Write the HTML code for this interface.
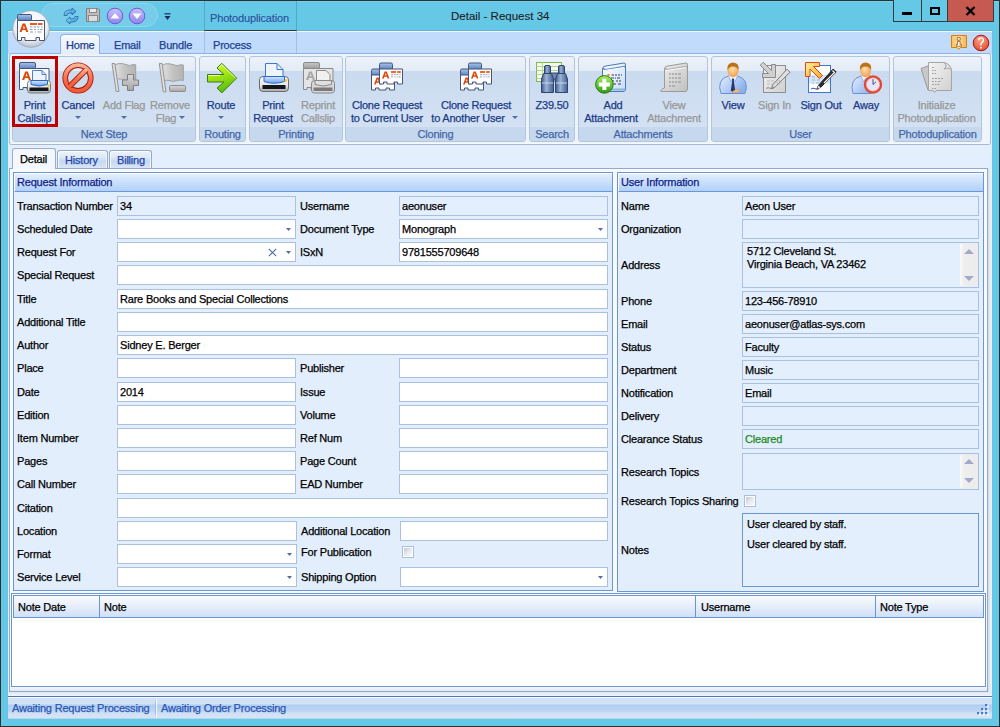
<!DOCTYPE html>
<html><head><meta charset="utf-8">
<style>
*{box-sizing:border-box;margin:0;padding:0}
html,body{width:1000px;height:727px;overflow:hidden;background:#2f2f2f}
body{font-family:"Liberation Sans",sans-serif;font-size:11px;position:relative;-webkit-text-stroke-width:0.25px}
.a{position:absolute}
#frame{left:1px;top:1px;width:998px;height:725px;background:#66c8e7}
.t{position:absolute;white-space:nowrap;line-height:13px;letter-spacing:-0.2px}
#client{left:8px;top:31px;width:984px;height:688px;background:#e4effd}
#tabstrip{left:8px;top:31px;width:984px;height:23px;background:#c1dbfc;border-top:1px solid #eef5fb}
#ribbon{left:9px;top:53px;width:982px;height:91px;background:#eef4fb;border:1px solid #a6c0e4;border-top-color:#8db2e3;border-bottom:1px solid #f4f9fe;border-radius:3px;box-shadow:0 1px 0 #a9b8cc}
.grp{position:absolute;top:56px;height:86px;border:1px solid #b2c5dc;border-radius:3px;background:linear-gradient(#edf2fa 0px,#e3ebf6 14px,#cbdbef 14.5px,#d3e1f3 70px);overflow:hidden}
.grp .lbl{position:absolute;left:0;right:0;bottom:0;height:14px;background:#c5d8ee;color:#4566a8;text-align:center;line-height:14px;font-size:11px;letter-spacing:-0.2px}
.rb{position:absolute;color:#1b3a86;text-align:center;white-space:nowrap;line-height:13px;letter-spacing:-0.2px}
.dis{color:#979797}
.dd{position:absolute;width:0;height:0;border-left:3px solid transparent;border-right:3px solid transparent;border-top:3px solid #4f6fa3}
.lab{position:absolute;white-space:nowrap;color:#000;line-height:13px;letter-spacing:-0.2px}
.fld{position:absolute;height:20px;background:#fff;border:1px solid #abc0df}
.ro{background:#e4effd}
.ft{position:absolute;left:2px;top:3px;white-space:nowrap;color:#000;line-height:13px;letter-spacing:-0.2px}
.grpb{position:absolute;border:1px solid #6d97d3;background:#e3eefc}
.gh{position:absolute;left:0;top:0;right:0;height:19px;border-top:1px solid #fff;border-left:1px solid #fff;border-bottom:1px solid #6d97d3;background:linear-gradient(#e3eefc,#b0d0fb);color:#101c86;padding-left:2px;line-height:17px;white-space:nowrap;letter-spacing:-0.2px}
.cb{position:absolute;width:12px;height:12px;border:1px solid #a8c0e0;background:#fff}.cb::after{content:'';position:absolute;left:1px;top:1px;width:8px;height:8px;background:linear-gradient(135deg,#c0c6d0,#e6e9ee 50%,#fafafa)}
.sb{position:absolute;background:linear-gradient(90deg,#fafafa,#eeeeee 4px,#ececec)}
.ua{position:absolute;width:0;height:0;border-left:5px solid transparent;border-right:5px solid transparent;border-bottom:5px solid #a3aac9}
.da{position:absolute;width:0;height:0;border-left:5px solid transparent;border-right:5px solid transparent;border-top:5px solid #a3aac9}

</style></head><body>
<div id="frame" class="a"></div>
<div class="a" style="left:1px;top:1px;width:998px;height:1px;background:#72d3f1"></div>
<div class="a" style="left:8px;top:30px;width:984px;height:1px;background:#64b2cf"></div>
<div id="client" class="a"></div>
<div id="tabstrip" class="a"></div>
<div class="t" style="left:451px;top:10px;font-size:11.5px;color:#1e1e1e;letter-spacing:0;-webkit-text-stroke-width:0.1px">Detail - Request 34</div>
<!-- window buttons -->
<div class="a" style="left:893px;top:0px;width:101px;height:22px;border:1px solid #3a3a3a;border-top:none;background:#66c8e7"></div>
<div class="a" style="left:921px;top:0px;width:1px;height:21px;background:#3a3a3a"></div>
<div class="a" style="left:947px;top:0px;width:1px;height:21px;background:#3a3a3a"></div>
<div class="a" style="left:948px;top:0px;width:45px;height:21px;background:#c75a50"></div>
<div class="a" style="left:902px;top:12px;width:10px;height:3px;background:#000"></div>
<div class="a" style="left:930px;top:7px;width:10px;height:8px;border:2px solid #000;border-top-width:2px"></div>
<svg class="a" style="left:965px;top:6px" width="11" height="10" viewBox="0 0 11 10"><path d="M1.5 1L9.5 9M9.5 1L1.5 9" stroke="#000" stroke-width="2.4"/></svg>
<!-- QAT pill -->
<div class="a" style="left:41px;top:3px;width:117px;height:24px;border-radius:12px;background:#77ccea;border:1px solid #8fd7f0"></div>
<!-- app orb -->
<svg class="a" style="left:11px;top:9px" width="40" height="40" viewBox="0 0 40 40">
 <defs><radialGradient id="gOrb" cx="0.5" cy="0.35" r="0.65"><stop offset="0" stop-color="#ffffff"/><stop offset="0.7" stop-color="#eef0f4"/><stop offset="1" stop-color="#b8bec8"/></radialGradient></defs>
 <circle cx="20" cy="20" r="18.3" fill="url(#gOrb)" stroke="#9aa4b4" stroke-width="0.8"/>
 <rect x="6.5" y="5.5" width="14" height="6" rx="1.3" fill="url(#gTab)" stroke="#43577a"/>
 <path d="M6.5 11.5H33.5V31.5H28.5V28.5H25V31.5H14V28.5H10.5V31.5H6.5Z" fill="#fff" stroke="#43577a"/>
 <path d="M8.5 23L11.6 14.5H14.2L17.3 23H15.2L14.5 21H11.3L10.6 23ZM11.9 19.4H14L12.9 16.4Z" fill="#dc4a0c"/>
 <rect x="19" y="14" width="7" height="2" fill="#e65a1a"/><rect x="27" y="14" width="4.5" height="2" fill="#e65a1a"/>
 <path d="M19 18h2.5M22.5 18h2.5M26 18h2.5M30 18h1.5M19 20.5h2.5M23 20.5h2M26.5 20.5h1.5M29 20.5h2.5M19 23h3M24 23h1M26.5 23h4" stroke="#8f9ab0" stroke-width="1"/>
</svg>
<!-- QAT icons -->
<svg class="a" style="left:62px;top:7px" width="18" height="18" viewBox="0 0 18 18">
 <defs><linearGradient id="gSync" x1="0" y1="0" x2="1" y2="1"><stop offset="0" stop-color="#a8dcf8"/><stop offset="1" stop-color="#2a8ad0"/></linearGradient></defs>
 <path d="M2 8.5Q2 3 8 3H10V1L14 4.5L10 8V6H8Q5 6 5 8.5Z" fill="url(#gSync)" stroke="#1a6aa8" stroke-width="0.8"/>
 <path d="M16 9.5Q16 15 10 15H8V17L4 13.5L8 10V12H10Q13 12 13 9.5Z" fill="url(#gSync)" stroke="#1a6aa8" stroke-width="0.8"/>
</svg>
<svg class="a" style="left:85px;top:7px" width="16" height="16" viewBox="0 0 16 16">
 <path d="M1.5 1.5H13L14.5 3V14.5H1.5Z" fill="#bdbdbd" stroke="#7e7e7e"/>
 <rect x="4.5" y="1.5" width="7" height="4" fill="#e8e8e8" stroke="#8a8a8a"/>
 <rect x="3.5" y="8.5" width="9" height="6" fill="#dcdcdc" stroke="#8a8a8a"/>
</svg>
<svg class="a" style="left:106px;top:7px" width="18" height="18" viewBox="0 0 18 18">
 <defs><linearGradient id="gPur" x1="0" y1="0" x2="0" y2="1"><stop offset="0" stop-color="#c8c0ff"/><stop offset="1" stop-color="#8e84ea"/></linearGradient></defs>
 <circle cx="9" cy="9" r="7.8" fill="url(#gPur)" stroke="#6a5ed0" stroke-width="1"/>
 <path d="M4.5 11.5L9 6L13.5 11.5Z" fill="#fff"/>
</svg>
<svg class="a" style="left:128px;top:7px" width="18" height="18" viewBox="0 0 18 18">
 <circle cx="9" cy="9" r="7.8" fill="url(#gPur)" stroke="#6a5ed0" stroke-width="1"/>
 <path d="M4.5 6.5L9 12L13.5 6.5Z" fill="#fff"/>
</svg>
<svg class="a" style="left:164px;top:13px" width="7" height="8" viewBox="0 0 7 8"><path d="M0.5 0.8H6.5" stroke="#1a2a6a" stroke-width="1.2"/><path d="M0.5 3L6.5 3L3.5 7Z" fill="#1a2a6a"/></svg>
<!-- contextual header -->
<div class="a" style="left:204px;top:1px;width:93px;height:30px;border-left:1px solid #56a8c8;border-right:1px solid #56a8c8;border-bottom:1px solid #2a3a40;background:#66c8e7"></div>
<div class="t" style="left:210px;top:12px;color:#2a4d9a;letter-spacing:-0.15px;-webkit-text-stroke-width:0.1px">Photoduplication</div>

<div class="a" style="left:204px;top:31px;width:1px;height:22px;background:#a3c0e8"></div>
<div class="a" style="left:296px;top:31px;width:1px;height:22px;background:#a3c0e8"></div>
<!-- ribbon tabs -->
<div class="a" style="left:60px;top:34px;width:40px;height:21px;border:1px solid #8eb0de;border-bottom:none;border-radius:4px 4px 0 0;background:linear-gradient(#f8fbfe,#e9f0f9 60%,#e4ecf6)"></div>
<div class="t" style="left:66px;top:39px;color:#1e3f92">Home</div>
<div class="t" style="left:114px;top:39px;color:#1e3f92">Email</div>
<div class="t" style="left:159px;top:39px;color:#1e3f92">Bundle</div>
<div class="t" style="left:213px;top:39px;color:#1e3f92">Process</div>
<!-- info & help -->
<svg class="a" style="left:950px;top:34px" width="18" height="18" viewBox="0 0 18 18">
 <defs><linearGradient id="gInfo" x1="0" y1="0" x2="1" y2="0"><stop offset="0" stop-color="#fbc060"/><stop offset="0.5" stop-color="#ffe0a8"/><stop offset="1" stop-color="#f8b050"/></linearGradient></defs>
 <path d="M1.5 1.5H16.5V13.5H10.5L8.8 15.5L7 13.5H1.5Z" fill="url(#gInfo)" stroke="#d4840c" stroke-linejoin="round"/>
 <path d="M7.2 3.6h3v2.6h-3zM7.5 7.4h2.6v3.2h1.4v1.6h-5.4v-1.6h1.4z" fill="#fff" stroke="#a86418" stroke-width="0.9"/>
</svg>
<svg class="a" style="left:972px;top:34px" width="18" height="18" viewBox="0 0 18 18">
 <defs><radialGradient id="gHelp" cx="0.45" cy="0.3" r="0.75"><stop offset="0" stop-color="#ffa088"/><stop offset="1" stop-color="#e0482c"/></radialGradient></defs>
 <circle cx="9" cy="9" r="7.8" fill="url(#gHelp)" stroke="#a81808" stroke-width="1"/>
 <path d="M6.6 6.2Q6.8 3.9 9.2 3.9Q11.6 4.1 11.4 6.3Q11.2 7.8 9.6 8.8Q8.9 9.4 8.9 11.4" stroke="#fff" stroke-width="1.4" fill="none"/>
 <circle cx="8.9" cy="13.7" r="0.9" fill="#fff"/>
</svg>
<svg width="0" height="0" style="position:absolute">
<defs>
<linearGradient id="gTab" x1="0" y1="0" x2="0" y2="1"><stop offset="0" stop-color="#a9c4ec"/><stop offset="1" stop-color="#5c7fbd"/></linearGradient>
<linearGradient id="gTabG" x1="0" y1="0" x2="0" y2="1"><stop offset="0" stop-color="#c8c8c8"/><stop offset="1" stop-color="#9a9a9a"/></linearGradient>
<linearGradient id="gRed" x1="0" y1="0" x2="0" y2="1"><stop offset="0" stop-color="#ffb296"/><stop offset="0.5" stop-color="#f7704e"/><stop offset="1" stop-color="#f05a36"/></linearGradient>
<linearGradient id="gPlus" x1="0" y1="0" x2="0" y2="1"><stop offset="0" stop-color="#d8d8d8"/><stop offset="1" stop-color="#a4a4a4"/></linearGradient>
<linearGradient id="gGray" x1="0" y1="0" x2="1" y2="0"><stop offset="0" stop-color="#e2e2e2"/><stop offset="0.5" stop-color="#c4c4c4"/><stop offset="1" stop-color="#b4b4b4"/></linearGradient>
<linearGradient id="gGreen" x1="0" y1="0" x2="0.3" y2="1"><stop offset="0" stop-color="#d8ff40"/><stop offset="0.45" stop-color="#a8e810"/><stop offset="1" stop-color="#5cc010"/></linearGradient>
<linearGradient id="gPrn" x1="0" y1="0" x2="0" y2="1"><stop offset="0" stop-color="#ffffff"/><stop offset="0.6" stop-color="#e4e4e4"/><stop offset="1" stop-color="#a8a8a8"/></linearGradient>
<linearGradient id="gLid" x1="0" y1="0" x2="0" y2="1"><stop offset="0" stop-color="#d8e8ff"/><stop offset="1" stop-color="#6aa0ee"/></linearGradient>
<linearGradient id="gBino" x1="0" y1="0" x2="1" y2="0"><stop offset="0" stop-color="#3e5a86"/><stop offset="0.4" stop-color="#9cb4d8"/><stop offset="1" stop-color="#425e8c"/></linearGradient>
<linearGradient id="gShirt" x1="0" y1="0" x2="1" y2="0.6"><stop offset="0" stop-color="#e4eeff"/><stop offset="0.5" stop-color="#b8d0f8"/><stop offset="1" stop-color="#8cb0ec"/></linearGradient>
<radialGradient id="gFace" cx="0.45" cy="0.4" r="0.6"><stop offset="0" stop-color="#ffe0b0"/><stop offset="1" stop-color="#f0a050"/></radialGradient>
<linearGradient id="gGrnC" x1="0" y1="0" x2="0" y2="1"><stop offset="0" stop-color="#a8f060"/><stop offset="1" stop-color="#2e9a10"/></linearGradient>
<linearGradient id="gScroll" x1="0" y1="0" x2="1" y2="1"><stop offset="0" stop-color="#ffffff"/><stop offset="1" stop-color="#c8dcf4"/></linearGradient>
<linearGradient id="gScrollG" x1="0" y1="0" x2="1" y2="1"><stop offset="0" stop-color="#f0f0f0"/><stop offset="1" stop-color="#c0c0c0"/></linearGradient>
<linearGradient id="gDoc" x1="0" y1="0" x2="1" y2="1"><stop offset="0" stop-color="#f4f4f4"/><stop offset="1" stop-color="#cfcfcf"/></linearGradient>
<g id="card">
 <rect x="0.5" y="0.5" width="13" height="6.5" rx="1.5" fill="url(#gTab)" stroke="#43577a"/>
 <path d="M0.5 6.5H23.5V21.5H18.5V19.5H15V21.5H8V19.5H4.5V21.5H0.5Z" fill="#fff" stroke="#43577a"/>
 <path d="M3 16L5.6 9H7.8L10.4 16H8.6L8 14.3H5.4L4.8 16ZM5.9 12.8H7.5L6.7 10.5Z" fill="#dc4a0c"/>
 <rect x="12" y="8.6" width="5" height="1.8" fill="#e65a1a"/><rect x="18.2" y="8.6" width="3.6" height="1.8" fill="#e65a1a"/>
 <path d="M12 12.2h2.2M15 12.2h1.8M17.6 12.2h1.8M20.4 12.2h1.2M12 14.4h2.2M15.4 14.4h1.2M17.6 14.4h1M19.4 14.4h2.2" stroke="#9aa4b4" stroke-width="1"/>
</g>
</defs></svg>
<div id="ribbon" class="a"></div>
<div class="a" style="left:61px;top:53px;width:38px;height:2px;background:#eaf0f8"></div>
<div class="grp" style="left:12px;width:184px"><div class="lbl">Next Step</div></div>
<div class="grp" style="left:199px;width:47px"><div class="lbl">Routing</div></div>
<div class="grp" style="left:249px;width:94px"><div class="lbl">Printing</div></div>
<div class="grp" style="left:345px;width:181px"><div class="lbl">Cloning</div></div>
<div class="grp" style="left:529px;width:46px"><div class="lbl">Search</div></div>
<div class="grp" style="left:578px;width:130px"><div class="lbl">Attachments</div></div>
<div class="grp" style="left:711px;width:179px"><div class="lbl">User</div></div>
<div class="grp" style="left:893px;width:89px"><div class="lbl">Photoduplication</div></div>

<!-- selected Print Callslip -->
<div class="a" style="left:12px;top:56px;width:46px;height:71px;border:3px solid #c00000;background:linear-gradient(#edf3fa,#e3ebf6 11.5px,#cbdbef 12px,#d3e1f3)"></div>

<!-- labels -->
<div class="rb" style="left:10px;width:49px;top:99px">Print<br>Callslip</div>
<div class="rb" style="left:57px;width:42px;top:99px">Cancel</div><div class="dd" style="left:75px;top:116px"></div>
<div class="rb dis" style="left:98px;width:52px;top:99px">Add Flag</div><div class="dd" style="left:121px;top:116px"></div>
<div class="rb dis" style="left:148px;width:44px;top:99px">Remove</div><div class="rb dis" style="left:152px;width:28px;top:112px">Flag</div><div class="dd" style="left:179px;top:116px"></div>
<div class="rb" style="left:202px;width:38px;top:99px">Route</div><div class="dd" style="left:218px;top:116px"></div>
<div class="rb" style="left:251px;width:44px;top:99px">Print<br>Request</div>
<div class="rb dis" style="left:297px;width:42px;top:99px">Reprint<br>Callslip</div>
<div class="rb" style="left:347px;width:80px;top:99px">Clone Request<br>to Current User</div>
<div class="rb" style="left:436px;width:80px;top:99px">Clone Request</div><div class="rb" style="left:426px;width:84px;top:112px">to Another User</div><div class="dd" style="left:512px;top:116px"></div>
<div class="rb" style="left:531px;width:42px;top:99px">Z39.50</div>
<div class="rb" style="left:595px;width:36px;top:99px">Add</div><div class="rb" style="left:580px;width:62px;top:112px">Attachment</div>
<div class="rb dis" style="left:656px;width:36px;top:99px">View</div><div class="rb dis" style="left:643px;width:62px;top:112px">Attachment</div>
<div class="rb" style="left:715px;width:36px;top:99px">View</div>
<div class="rb dis" style="left:754px;width:41px;top:99px">Sign In</div>
<div class="rb" style="left:798px;width:46px;top:99px">Sign Out</div>
<div class="rb" style="left:848px;width:36px;top:99px">Away</div>
<div class="rb dis" style="left:894px;width:85px;top:99px">Initialize<br>Photoduplication</div>

<!-- icons -->
<!-- Print Callslip -->
<svg class="a" style="left:19px;top:61px" width="32" height="33" viewBox="0 0 32 33">
 <rect x="0.5" y="1.5" width="16" height="6.5" rx="1.5" fill="url(#gTab)" stroke="#43577a"/>
 <path d="M0.5 7.5H30V28.5H8V26.5H4V28.5H0.5Z" fill="#fff" stroke="#43577a"/>
 <path d="M3 19L6.2 10.5H8.8L12 19H9.8L9.1 17H6L5.3 19ZM6.5 15.3H8.6L7.5 12.3Z" fill="#d94a0c"/>
 <path d="M13.5 9.5H23L27 13.5V21H13.5Z" fill="#eef4fc" stroke="#4d7fd0"/>
 <path d="M23 9.5V13.5H27" fill="none" stroke="#4d7fd0"/>
 <rect x="8.5" y="19.5" width="23" height="12.5" rx="3" fill="url(#gPrn)" stroke="#7a7a7a"/>
 <path d="M12 19.5H28.5V23.5Q20 26.5 12 23.5Z" fill="url(#gLid)" stroke="#2c68c8"/>
 <rect x="10.5" y="26.5" width="19" height="3.5" fill="#14141e"/>
 <circle cx="29.5" cy="24.5" r="1.3" fill="#ffc800"/>
</svg>
<!-- Cancel -->
<svg class="a" style="left:62px;top:62px" width="32" height="32" viewBox="0 0 32 32">
 <circle cx="16" cy="16" r="12.8" fill="none" stroke="#a81808" stroke-width="5.6"/>
 <circle cx="16" cy="16" r="12.8" fill="none" stroke="url(#gRed)" stroke-width="3.8"/>
 <path d="M24.3 7.7L7.7 24.3" stroke="#a81808" stroke-width="5.6"/>
 <path d="M24.8 7.2L7.2 24.8" stroke="url(#gRed)" stroke-width="3.8"/>
</svg>
<!-- Add Flag -->
<svg class="a" style="left:108px;top:61px" width="34" height="33" viewBox="0 0 34 33">
 <path d="M6.5 4.2Q10 1.8 14 2.6T21.5 4.6Q25 3 27.7 3.8V18.2Q24.5 17 21 18.4T13.5 18.2Q10 17.2 8.6 18.6Z" fill="url(#gGray)" stroke="#a0a0a0"/>
 <path d="M4 2.5H6.8L11 30.5H8.2Z" fill="#dedede" stroke="#959595" stroke-linejoin="round"/>
 <path d="M19.5 13.5H25.5V19H30.5V24.5H25.5V29.5H19.5V24.5H14.5V19H19.5Z" fill="url(#gPlus)" stroke="#808080" stroke-linejoin="round"/>
</svg>
<!-- Remove Flag -->
<svg class="a" style="left:155px;top:61px" width="34" height="33" viewBox="0 0 34 33">
 <path d="M6.8 4.5Q10.5 2 14.5 2.8T22 4.8Q25.5 3.2 28.3 4V19.5Q25 18.3 21.5 19.7T14 19.5Q10.5 18.5 9 20Z" fill="url(#gGray)" stroke="#a0a0a0"/>
 <path d="M4.3 2.5H7.1L11 30.8H8.2Z" fill="#dedede" stroke="#959595" stroke-linejoin="round"/>
 <rect x="14.5" y="24.5" width="16" height="6" rx="1" fill="url(#gPlus)" stroke="#8e8e8e"/>
</svg>
<!-- Route -->
<svg class="a" style="left:205px;top:61px" width="34" height="34" viewBox="0 0 34 34">
 <path d="M2.5 13.5H19L12 7L16.8 2.3L31.6 17.1L16.8 31.9L12 27L19 21H2.5Z" fill="url(#gGreen)" stroke="#3c7a14" stroke-linejoin="miter"/>
 <path d="M3.5 14.5H15M14 7L16.8 3.8L30.5 17" stroke="#f4ffd0" stroke-width="1" fill="none" opacity="0.9"/>
</svg>
<!-- Print Request -->
<svg class="a" style="left:257px;top:61px" width="33" height="33" viewBox="0 0 33 33">
 <path d="M8.5 2.5H20L26 8.5V20H8.5Z" fill="#eef4fc" stroke="#3f78d0"/>
 <path d="M20 2.5V8.5H26" fill="none" stroke="#3f78d0"/>
 <rect x="2.5" y="15.5" width="29" height="15" rx="3.5" fill="url(#gPrn)" stroke="#6e6e6e"/>
 <path d="M7 15.5H27.5V20.5Q17 24 7 20.5Z" fill="url(#gLid)" stroke="#2c68c8"/>
 <rect x="5.5" y="24" width="23" height="4" fill="#14141e"/>
 <circle cx="29" cy="19.5" r="1.3" fill="#ffc800"/>
</svg>
<!-- Reprint Callslip -->
<svg class="a" style="left:303px;top:61px" width="33" height="33" viewBox="0 0 33 33">
 <rect x="0.5" y="1.5" width="16" height="6.5" rx="1.5" fill="url(#gTabG)" stroke="#8a8a8a"/>
 <path d="M0.5 7.5H30V28.5H8V26.5H4V28.5H0.5Z" fill="#e4e4e4" stroke="#8a8a8a"/>
 <path d="M3 19L6.2 10.5H8.8L12 19H9.8L9.1 17H6L5.3 19ZM6.5 15.3H8.6L7.5 12.3Z" fill="#a8a8a8"/>
 <path d="M13.5 9.5H23L27 13.5V21H13.5Z" fill="#f0f0f0" stroke="#8a8a8a"/>
 <rect x="8.5" y="19.5" width="23" height="12.5" rx="3" fill="#d8d8d8" stroke="#858585"/>
 <path d="M12 19.5H28.5V23.5Q20 26.5 12 23.5Z" fill="#e0e0e0" stroke="#8a8a8a"/>
 <rect x="10.5" y="26.5" width="19" height="3.5" fill="#7a7a7a"/>
</svg>
<!-- Clone 1 -->
<svg class="a" style="left:371px;top:62px" width="33" height="31" viewBox="0 0 33 31">
 <use href="#card" x="0" y="6.5"/>
 <use href="#card" x="8" y="0.5"/>
</svg>
<!-- Clone 2 -->
<svg class="a" style="left:460px;top:62px" width="33" height="31" viewBox="0 0 33 31">
 <use href="#card" x="0" y="6.5"/>
 <use href="#card" x="8" y="0.5"/>
</svg>
<!-- Z39.50 -->
<svg class="a" style="left:536px;top:61px" width="33" height="33" viewBox="0 0 33 33">
 <rect x="0.5" y="1.5" width="25" height="19" fill="#f6fbee" stroke="#7cba4a"/>
 <path d="M0.5 5.5H25.5M0.5 9.5H25.5M0.5 13.5H25.5M0.5 17.5H25.5M6.5 1.5V20.5" stroke="#b0d890" stroke-width="1"/>
 <rect x="8.5" y="4.5" width="6" height="9" rx="1.5" fill="url(#gBino)" stroke="#2e4670"/>
 <rect x="22.5" y="4.5" width="6" height="9" rx="1.5" fill="url(#gBino)" stroke="#2e4670"/>
 <rect x="14" y="12" width="9" height="7" fill="#7088b0" stroke="#2e4670"/>
 <path d="M7.5 12.5H15.5L17.5 18V31.5H5.5V18Z" fill="url(#gBino)" stroke="#2e4670"/>
 <path d="M21.5 12.5H29.5L31.5 18V31.5H19.5V18Z" fill="url(#gBino)" stroke="#2e4670"/>
 <path d="M6 22H17M20 22H31" stroke="#c8d8f0" stroke-width="1"/>
</svg>
<!-- Add Attachment -->
<svg class="a" style="left:594px;top:61px" width="34" height="34" viewBox="0 0 34 34">
 <path d="M8.5 7.5Q9 5 12 5L30 2Q32 2 31.5 4.5V28Q31.5 30.5 29 30.5H10Q8.5 30.5 8.5 28.5Z" fill="url(#gScroll)" stroke="#4a78b0"/>
 <path d="M9 7Q10 9 13 8.5L31 5.5" stroke="#5a88c0" stroke-width="1.6" fill="none"/>
 <path d="M10 9.5L30 6.5" stroke="#ffffff" stroke-width="1" fill="none"/>
 <rect x="13.5" y="13" width="2" height="1.8" fill="#f07828"/>
 <path d="M17.5 14h2.5M21 14h2M24 14h2M27 14h1M17 17h3M21 17h1M23 17h3M18 20h2M22 20h2M25 20h2M19 23h3M24 23h3" stroke="#6a7894" stroke-width="1.3"/>
 <path d="M9 28.5H31" stroke="#8eb4e0" stroke-width="2"/>
 <circle cx="10.4" cy="23.4" r="8.8" fill="url(#gGrnC)" stroke="#2a7a10"/>
 <path d="M8.4 17.8h4v3.6h3.6v4h-3.6v3.6h-4v-3.6h-3.6v-4h3.6z" fill="#fff"/>
</svg>
<!-- View Attachment -->
<svg class="a" style="left:658px;top:61px" width="32" height="33" viewBox="0 0 32 33">
 <path d="M6.5 7.5Q7 5 10 5L28 2Q30 2 29.5 4.5V28Q29.5 30.5 27 30.5H3Q2 30.5 3.5 28.5L6.5 27Z" fill="url(#gScrollG)" stroke="#9a9a9a"/>
 <path d="M7 7Q8 9 11 8.5L29 5.5" stroke="#a8a8a8" stroke-width="1.6" fill="none"/>
 <path d="M8 9.5L28 6.5" stroke="#ffffff" stroke-width="1" fill="none"/>
 <path d="M11 13h2M14 13h2M17 13h2M20 13h3M11 17h2M14 17h2M17 17h2M20 17h3M11 21h2M14 21h2M17 21h2M20 21h3M11 25h2M14 25h3" stroke="#a4a4a4" stroke-width="1.3"/>
</svg>
<!-- View user -->
<svg class="a" style="left:717px;top:61px" width="32" height="34" viewBox="0 0 32 34">
 <path d="M4 32.5Q1.5 26 3.5 21Q5.5 16.5 11.5 15L16 17.5L20.5 15Q26.5 16.5 28.5 21Q30.5 26 28 32.5Z" fill="url(#gShirt)" stroke="#6a90d8"/>
 <path d="M11.5 15L14 21L16 17.5L18 21L20.5 15" fill="#eef4ff" stroke="#88a8e0" stroke-width="0.8"/>
 <path d="M14.8 17.8h2.4l-0.4 2.2 1.4 9.5-2.2 2.3-2.2-2.3 1.4-9.5z" fill="#263a6e"/>
 <ellipse cx="16" cy="9.6" rx="5.4" ry="6.6" fill="url(#gFace)"/>
 <path d="M10.4 9.8Q9.2 2.2 16 1.5Q23 2 21.6 9.8Q21 5.8 16 5.6Q11.4 5.8 10.4 9.8Z" fill="#b8741c"/>
 <path d="M15.5 30.5Q19 27.5 23.5 29Q21 32 15.5 31.8Z" fill="#f6c090" stroke="#d08850" stroke-width="0.5"/>
</svg>
<!-- Sign In -->
<svg class="a" style="left:759px;top:61px" width="33" height="33" viewBox="0 0 33 33">
 <rect x="4.5" y="4.5" width="22" height="27" fill="url(#gDoc)" stroke="#8e8e8e"/>
 <path d="M8 20h3M12 20h3M8 23h3M12 23h3" stroke="#c0c0c0"/>
 <path d="M7 27.5Q9 26 11 27.2T15 27" stroke="#8a8a8a" fill="none"/>
 <path d="M3.5 12.5H9.5L1.2 4.2L4.2 1.2L12.5 9.5V3.5H16.5V16.5H3.5Z" fill="#d0d0d0" stroke="#8a8a8a"/>
 <path d="M28 8.2L31 11.2L16.5 25.7L12.5 27.5L14 23.5Z" fill="#e0e0e0" stroke="#7a7a7a"/>
 <path d="M17.5 21L20 23.5M19.5 19L22 21.5" stroke="#909090" stroke-width="0.8"/>
</svg>
<!-- Sign Out -->
<svg class="a" style="left:805px;top:61px" width="33" height="33" viewBox="0 0 33 33">
 <defs><linearGradient id="gOrg" x1="0" y1="0" x2="1" y2="1"><stop offset="0" stop-color="#fff0a0"/><stop offset="1" stop-color="#ffa820"/></linearGradient></defs>
 <rect x="3.5" y="4.5" width="22" height="27" fill="#fdfeff" stroke="#3f74d8"/>
 <rect x="4" y="14" width="21" height="8.5" fill="#d6e6fa"/>
 <path d="M7 16h3M12 16h3M7 19h3M12 19h3M7 22h2M11 22h3" stroke="#9cb4d4"/>
 <path d="M6 28Q8 26.5 10 27.7T14 27.5" stroke="#3a5aa0" fill="none"/>
 <path d="M28.2 8L31.2 11L15.8 26.2L12 28L13.6 24.2Z" fill="#2e2e2e" stroke="#1e1e1e"/>
 <path d="M27.5 9.5L29.5 11.5L19 22" stroke="#ffffff" stroke-width="1.2" fill="none"/>
 <path d="M13.5 24.5L15.5 26.5L12.3 27.7Z" fill="#e8e8e8"/>
 <path d="M0.5 1.5H14.5V5.5H8.5L17.5 14.5L14.5 17.5L5 8V15.5H0.5Z" fill="url(#gOrg)" stroke="#e04810" stroke-linejoin="miter"/>
</svg>
<!-- Away -->
<svg class="a" style="left:851px;top:61px" width="32" height="34" viewBox="0 0 32 34">
 <path d="M2 32.5Q0 26 2 21Q4 16.5 10 15L14.5 17.5L19 15Q23 16 25 18L20 32.5Z" fill="url(#gShirt)" stroke="#6a90d8"/>
 <path d="M10 15L12.5 21L14.5 17.5L16.5 21L19 15" fill="#eef4ff" stroke="#88a8e0" stroke-width="0.8"/>
 <ellipse cx="14.5" cy="9.6" rx="5.4" ry="6.6" fill="url(#gFace)"/>
 <path d="M8.9 9.8Q7.7 2.2 14.5 1.5Q21.5 2 20.1 9.8Q19.5 5.8 14.5 5.6Q9.9 5.8 8.9 9.8Z" fill="#b8741c"/>
 <circle cx="22" cy="23.5" r="8" fill="#e6e6fa" stroke="#e04830" stroke-width="2.4"/>
 <circle cx="22" cy="23.5" r="6.6" fill="none" stroke="#f8a090" stroke-width="0.6"/>
 <path d="M22 23.5V18.2M22 23.5L25 20.8" stroke="#50506e" stroke-width="1" fill="none"/>
</svg>
<!-- Photodup -->
<svg class="a" style="left:920px;top:61px" width="33" height="33" viewBox="0 0 33 33">
 <path d="M1 7.5L9 4.5L13 28L8 29Z" fill="#c8c8c8" stroke="#9a9a9a"/>
 <path d="M8.5 1.5H24Q30.5 3 31.5 9V29.5H16L14.5 31.5L13 29.5H8.5Z" fill="url(#gDoc)" stroke="#a4a4a4"/>
 <path d="M24 1.5Q28 5 24 8Q29 6 31.5 9" fill="#e4e4e4" stroke="#a4a4a4"/>
 <path d="M12 6.5h2M12 9.5h1.5M14.5 9.5h1.5M12 12.5h1.5M14.5 12.5h1.5M12 17.5h2M15 17.5h2M18 17.5h2M21 17.5h2M12 20.5h2M15 20.5h1.5M18 20.5h2.5M12 23.5h2M15 23.5h1.5M17.5 23.5h2M12 27.5h1.5M14.5 27.5h1.5" stroke="#a0a0a0" stroke-width="1"/>
</svg>
<div class="a" style="left:9px;top:168px;width:979px;height:524px;border:1px solid #97a9c9;background:#f3f6fb"></div>
<div class="a" style="left:10px;top:169px;width:977px;height:522px;background:#f6f9fd"></div>
<div class="a" style="left:988px;top:169px;width:4px;height:523px;background:linear-gradient(90deg,#d2dae6,#e6eef8 60%,#eef4fb)"></div>
<div class="a" style="left:12px;top:148px;width:44px;height:21px;border:1px solid #9aaed0;border-bottom:none;border-radius:3px 3px 0 0;background:#f4f7fc"></div>
<div class="t" style="left:20px;top:153px;color:#000">Detail</div>
<div class="a" style="left:57px;top:150px;width:51px;height:18px;border:1px solid #97a9c9;border-bottom:none;border-radius:3px 3px 0 0;box-shadow:inset 1px 1px 0 #f8fbff,inset -1px 0 0 #f0f5fc;background:linear-gradient(#eef3fb,#dce7f6 40%,#c4d8f1 60%,#d9e6f6)"></div>
<div class="t" style="left:65px;top:154px;color:#1f45a6">History</div>
<div class="a" style="left:109px;top:150px;width:43px;height:18px;border:1px solid #97a9c9;border-bottom:none;border-radius:3px 3px 0 0;box-shadow:inset 1px 1px 0 #f8fbff,inset -1px 0 0 #f0f5fc;background:linear-gradient(#eef3fb,#dce7f6 40%,#c4d8f1 60%,#d9e6f6)"></div>
<div class="t" style="left:117px;top:154px;color:#1f45a6">Billing</div>
<div class="grpb" style="left:13px;top:172px;width:600px;height:419px"><div class="gh">Request Information</div></div>
<div class="grpb" style="left:617px;top:172px;width:367px;height:420px"><div class="gh">User Information</div></div>
<div class="lab" style="left:17px;top:200px;">Transaction Number</div>
<div class="fld ro" style="left:117px;top:196px;width:179px;height:20px;"><div class="ft">34</div></div>
<div class="lab" style="left:300px;top:200px;">Username</div>
<div class="fld ro" style="left:399px;top:196px;width:209px;height:20px;"><div class="ft">aeonuser</div></div>
<div class="lab" style="left:17px;top:223px;">Scheduled Date</div>
<div class="fld" style="left:117px;top:219px;width:179px;height:20px;"><svg class="a" style="left:168px;top:8px" width="5" height="3" viewBox="0 0 5 3"><path d="M0 0H5L2.5 3Z" fill="#4f6fa3"/></svg></div>
<div class="lab" style="left:300px;top:223px;">Document Type</div>
<div class="fld" style="left:399px;top:219px;width:209px;height:20px;"><div class="ft">Monograph</div><svg class="a" style="left:198px;top:8px" width="5" height="3" viewBox="0 0 5 3"><path d="M0 0H5L2.5 3Z" fill="#4f6fa3"/></svg></div>
<div class="lab" style="left:17px;top:246px;">Request For</div>
<div class="fld" style="left:117px;top:242px;width:179px;height:20px;"><svg class="a" style="left:168px;top:8px" width="5" height="3" viewBox="0 0 5 3"><path d="M0 0H5L2.5 3Z" fill="#4f6fa3"/></svg><svg class="a" style="left:150px;top:5px" width="9" height="9" viewBox="0 0 9 9"><path d="M0.8 0.8L8.2 8.2M8.2 0.8L0.8 8.2" stroke="#4a6ea6" stroke-width="1.1"/></svg></div>
<div class="lab" style="left:300px;top:246px;">ISxN</div>
<div class="fld" style="left:399px;top:242px;width:209px;height:20px;"><div class="ft">9781555709648</div></div>
<div class="lab" style="left:17px;top:269px;">Special Request</div>
<div class="fld" style="left:117px;top:265px;width:491px;height:20px;"></div>
<div class="lab" style="left:17px;top:293px;">Title</div>
<div class="fld" style="left:117px;top:289px;width:491px;height:20px;"><div class="ft">Rare Books and Special Collections</div></div>
<div class="lab" style="left:17px;top:316px;">Additional Title</div>
<div class="fld" style="left:117px;top:312px;width:491px;height:20px;"></div>
<div class="lab" style="left:17px;top:339px;">Author</div>
<div class="fld" style="left:117px;top:335px;width:491px;height:20px;"><div class="ft">Sidney E. Berger</div></div>
<div class="lab" style="left:17px;top:362px;">Place</div>
<div class="fld" style="left:117px;top:358px;width:179px;height:20px;"></div>
<div class="lab" style="left:300px;top:362px;">Publisher</div>
<div class="fld" style="left:399px;top:358px;width:209px;height:20px;"></div>
<div class="lab" style="left:17px;top:386px;">Date</div>
<div class="fld" style="left:117px;top:382px;width:179px;height:20px;"><div class="ft">2014</div></div>
<div class="lab" style="left:300px;top:386px;">Issue</div>
<div class="fld" style="left:399px;top:382px;width:209px;height:20px;"></div>
<div class="lab" style="left:17px;top:409px;">Edition</div>
<div class="fld" style="left:117px;top:405px;width:179px;height:20px;"></div>
<div class="lab" style="left:300px;top:409px;">Volume</div>
<div class="fld" style="left:399px;top:405px;width:209px;height:20px;"></div>
<div class="lab" style="left:17px;top:432px;">Item Number</div>
<div class="fld" style="left:117px;top:428px;width:179px;height:20px;"></div>
<div class="lab" style="left:300px;top:432px;">Ref Num</div>
<div class="fld" style="left:399px;top:428px;width:209px;height:20px;"></div>
<div class="lab" style="left:17px;top:455px;">Pages</div>
<div class="fld" style="left:117px;top:451px;width:179px;height:20px;"></div>
<div class="lab" style="left:300px;top:455px;">Page Count</div>
<div class="fld" style="left:399px;top:451px;width:209px;height:20px;"></div>
<div class="lab" style="left:17px;top:478px;">Call Number</div>
<div class="fld" style="left:117px;top:474px;width:179px;height:20px;"></div>
<div class="lab" style="left:300px;top:478px;">EAD Number</div>
<div class="fld" style="left:399px;top:474px;width:209px;height:20px;"></div>
<div class="lab" style="left:17px;top:502px;">Citation</div>
<div class="fld" style="left:117px;top:498px;width:491px;height:20px;"></div>
<div class="lab" style="left:17px;top:525px;">Location</div>
<div class="fld" style="left:117px;top:521px;width:180px;height:20px;"></div>
<div class="lab" style="left:301px;top:525px;">Additional Location</div>
<div class="fld" style="left:400px;top:521px;width:208px;height:20px;"></div>
<div class="lab" style="left:17px;top:548px;">Format</div>
<div class="fld" style="left:117px;top:544px;width:180px;height:20px;"><svg class="a" style="left:169px;top:8px" width="5" height="3" viewBox="0 0 5 3"><path d="M0 0H5L2.5 3Z" fill="#4f6fa3"/></svg></div>
<div class="lab" style="left:301px;top:546px;">For Publication</div>
<div class="cb" style="left:402px;top:546px"></div>
<div class="lab" style="left:17px;top:571px;">Service Level</div>
<div class="fld" style="left:117px;top:567px;width:180px;height:20px;"><svg class="a" style="left:169px;top:8px" width="5" height="3" viewBox="0 0 5 3"><path d="M0 0H5L2.5 3Z" fill="#4f6fa3"/></svg></div>
<div class="lab" style="left:301px;top:571px;">Shipping Option</div>
<div class="fld" style="left:400px;top:567px;width:208px;height:20px;"><svg class="a" style="left:197px;top:8px" width="5" height="3" viewBox="0 0 5 3"><path d="M0 0H5L2.5 3Z" fill="#4f6fa3"/></svg></div>
<div class="lab" style="left:621px;top:200px;">Name</div>
<div class="fld ro" style="left:742px;top:196px;width:237px;height:20px;"><div class="ft">Aeon User</div></div>
<div class="lab" style="left:621px;top:223px;">Organization</div>
<div class="fld ro" style="left:742px;top:219px;width:237px;height:20px;"></div>
<div class="lab" style="left:621px;top:259px;">Address</div>
<div class="fld ro" style="left:742px;top:242px;width:237px;height:46px"><div class="ft" style="left:4px;top:2px;line-height:13px">5712 Cleveland St.<br>Virginia Beach, VA 23462</div><div class="sb" style="left:217px;top:1px;width:18px;height:42px"><div class="ua" style="left:4px;top:5px"></div><div class="da" style="left:4px;top:32px"></div></div></div>
<div class="lab" style="left:621px;top:295px;">Phone</div>
<div class="fld ro" style="left:742px;top:291px;width:237px;height:20px;"><div class="ft">123-456-78910</div></div>
<div class="lab" style="left:621px;top:318px;">Email</div>
<div class="fld ro" style="left:742px;top:314px;width:237px;height:20px;"><div class="ft">aeonuser@atlas-sys.com</div></div>
<div class="lab" style="left:621px;top:341px;">Status</div>
<div class="fld ro" style="left:742px;top:337px;width:237px;height:20px;"><div class="ft">Faculty</div></div>
<div class="lab" style="left:621px;top:364px;">Department</div>
<div class="fld ro" style="left:742px;top:360px;width:237px;height:20px;"><div class="ft">Music</div></div>
<div class="lab" style="left:621px;top:387px;">Notification</div>
<div class="fld ro" style="left:742px;top:383px;width:237px;height:20px;"><div class="ft">Email</div></div>
<div class="lab" style="left:621px;top:410px;">Delivery</div>
<div class="fld ro" style="left:742px;top:406px;width:237px;height:20px;"></div>
<div class="lab" style="left:621px;top:433px;">Clearance Status</div>
<div class="fld ro" style="left:742px;top:429px;width:237px;height:20px;"><div class="ft" style="color:#1e8a1e">Cleared</div></div>
<div class="lab" style="left:621px;top:466px;">Research Topics</div>
<div class="fld ro" style="left:742px;top:453px;width:237px;height:37px"><div class="sb" style="left:217px;top:1px;width:18px;height:33px"><div class="ua" style="left:4px;top:4px"></div><div class="da" style="left:4px;top:23px"></div></div></div>
<div class="lab" style="left:621px;top:495px;">Research Topics Sharing</div>
<div class="cb" style="left:744px;top:495px"></div>
<div class="lab" style="left:621px;top:544px;">Notes</div>
<div class="fld ro" style="left:742px;top:513px;width:237px;height:74px;border-color:#6d97d3"><div class="ft" style="left:4px;top:0px;line-height:20px">User cleared by staff.<br>User cleared by staff.</div></div>
<div class="a" style="left:11px;top:593px;width:975px;height:94px;border:1px solid #6b95d0;background:#fff"></div>
<div class="a" style="left:10px;top:687px;width:977px;height:4px;background:linear-gradient(#f4f8fd,#dde7f3)"></div>
<div class="a" style="left:13px;top:595px;width:971px;height:23px;border:1px solid #6b95d0;background:linear-gradient(#f9fbfe,#e6eefa 50%,#cfe0f8)"></div>
<div class="a" style="left:99px;top:596px;width:1px;height:21px;background:#6b95d0"></div>
<div class="a" style="left:695px;top:596px;width:1px;height:21px;background:#6b95d0"></div>
<div class="a" style="left:875px;top:596px;width:1px;height:21px;background:#6b95d0"></div>
<div class="t" style="left:18px;top:601px;color:#000">Note Date</div>
<div class="t" style="left:104px;top:601px;color:#000">Note</div>
<div class="t" style="left:701px;top:601px;color:#000">Username</div>
<div class="t" style="left:880px;top:601px;color:#000">Note Type</div>
<div class="a" style="left:8px;top:692px;width:984px;height:4px;background:linear-gradient(#dfe8f4,#eef4fc)"></div>
<div class="a" style="left:8px;top:696px;width:984px;height:23px;border-top:1px solid #4f76b0;background:linear-gradient(#f8fbff 0px,#f8fbff 1px,#d2e2f6 1px,#d2e2f6 7px,#b0cef2 8px,#bcd4f2 14px,#d0e0f4 16px,#d6e4f6 21px,#9cc4dc 22px)"></div>
<div class="t" style="left:12px;top:702px;color:#2a56b4">Awaiting Request Processing</div>
<div class="a" style="left:155px;top:698px;width:1px;height:20px;background:linear-gradient(#d2e2f6,#9fb8dc 30%,#9fb8dc 70%,#d2e2f6)"></div>
<div class="a" style="left:156px;top:698px;width:1px;height:20px;background:#f4f8fe"></div>
<div class="t" style="left:161px;top:702px;color:#2a56b4">Awaiting Order Processing</div>
<svg class="a" style="left:976px;top:703px" width="14" height="14" viewBox="0 0 14 14">
 <path d="M10 2h2v2h-2zM6 6h2v2h-2zM10 6h2v2h-2zM2 10h2v2h-2zM6 10h2v2h-2zM10 10h2v2h-2z" fill="#fff" transform="translate(0.6,0.6)"/>
 <path d="M9 1h2.2v2.2h-2.2zM5 5h2.2v2.2h-2.2zM9 5h2.2v2.2h-2.2zM1 9h2.2v2.2h-2.2zM5 9h2.2v2.2h-2.2zM9 9h2.2v2.2h-2.2z" fill="#4a7cc8"/>
</svg>
</body></html>
